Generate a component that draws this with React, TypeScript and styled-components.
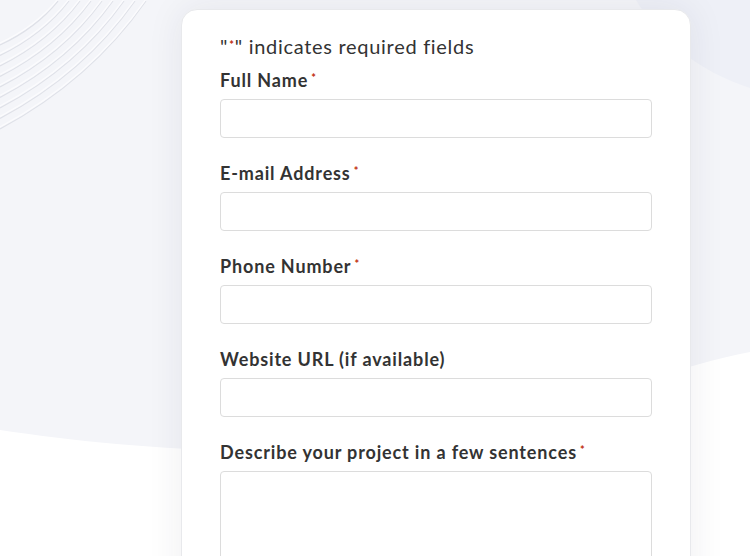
import React from "react";
import styled, { createGlobalStyle } from "styled-components";

const GlobalStyle = createGlobalStyle`
  html, body {
    margin: 0;
    padding: 0;
    background: #ffffff;
  }
  * {
    box-sizing: border-box;
  }
`;

const Page = styled.div`
  position: relative;
  width: 750px;
  height: 556px;
  overflow: hidden;
  padding: 9px 0 0 181px;
  font-family: Lato, "Open Sans", sans-serif;
  color: #333333;
`;

const Backdrop = styled.svg`
  position: absolute;
  inset: 0;
  z-index: 0;
`;

const Card = styled.form`
  position: relative;
  z-index: 1;
  width: 510px;
  min-height: 620px;
  background: #ffffff;
  border: 1px solid #e8e9ec;
  border-radius: 16px;
  box-shadow: 0 0 36px rgba(40, 44, 70, 0.08);
  padding: 23px 38px 0;
  display: flex;
  flex-direction: column;
`;

const Note = styled.p`
  margin: 0 0 9px;
  font-size: 20px;
  line-height: 26px;
  font-weight: 400;
  letter-spacing: 0.7px;
  color: #333333;
`;

const Field = styled.div`
  display: flex;
  flex-direction: column;
  margin-bottom: 23px;
`;

const Label = styled.label`
  font-size: 18px;
  line-height: 24px;
  font-weight: 700;
  letter-spacing: 0.85px;
  color: #333333;
  margin-bottom: 7px;
`;

const Required = styled.span<{ $inline?: boolean }>`
  display: inline-block;
  position: relative;
  top: -5px;
  line-height: 0;
  color: #c02b0a;
  font-size: 11px;
  font-weight: 700;
  letter-spacing: 0;
  margin-left: ${(p) => (p.$inline ? "1px" : "3px")};
  margin-right: ${(p) => (p.$inline ? "1px" : "0")};
`;

const Input = styled.input`
  width: 432px;
  height: 39px;
  border: 1px solid #dcdcdc;
  border-radius: 4px;
  background: #ffffff;
  font: inherit;
  padding: 0 12px;
  outline: none;
`;

const TextArea = styled.textarea`
  width: 432px;
  height: 180px;
  border: 1px solid #dcdcdc;
  border-radius: 4px;
  background: #ffffff;
  font: inherit;
  padding: 10px 12px;
  resize: none;
  outline: none;
`;

const stripes = Array.from({ length: 9 }, (_, i) => ({
  y: 44 + i * 10.5,
  x: 58 + i * 11,
}));

const fields = [
  { id: "name", label: "Full Name", required: true },
  { id: "email", label: "E-mail Address", required: true },
  { id: "phone", label: "Phone Number", required: true },
  { id: "website", label: "Website URL (if available)", required: false },
];

const App: React.FC = () => {
  return (
    <>
      <GlobalStyle />
      <Page>
        <Backdrop width="750" height="556" viewBox="0 0 750 556">
          <path
            d="M0 0 H750 V352 C 640 372 480 452 300 452 C 180 452 80 442 0 430 Z"
            fill="#f4f5f9"
          />
          <path
            d="M636 0 H750 V88 C 700 72 660 40 636 0 Z"
            fill="#eef0f7"
          />
          {stripes.map((s, i) => (
            <g key={i}>
              <path
                d={`M0 ${s.y + 1} Q ${s.x * 0.62} ${s.y * 0.62 + 1} ${s.x} 1`}
                fill="none"
                stroke="#dfe1e8"
                strokeWidth="1.2"
              />
              <path
                d={`M0 ${s.y - 1} Q ${s.x * 0.62} ${s.y * 0.62 - 1} ${s.x} -1`}
                fill="none"
                stroke="#fbfbfd"
                strokeWidth="1.4"
              />
            </g>
          ))}
        </Backdrop>
        <Card onSubmit={(e) => e.preventDefault()}>
          <Note>
            "<Required $inline>*</Required>" indicates required fields
          </Note>
          {fields.map((f) => (
            <Field key={f.id}>
              <Label htmlFor={f.id}>
                {f.label}
                {f.required && <Required>*</Required>}
              </Label>
              <Input id={f.id} type="text" />
            </Field>
          ))}
          <Field>
            <Label htmlFor="project">
              Describe your project in a few sentences
              <Required>*</Required>
            </Label>
            <TextArea id="project" />
          </Field>
        </Card>
      </Page>
    </>
  );
};

export default App;
